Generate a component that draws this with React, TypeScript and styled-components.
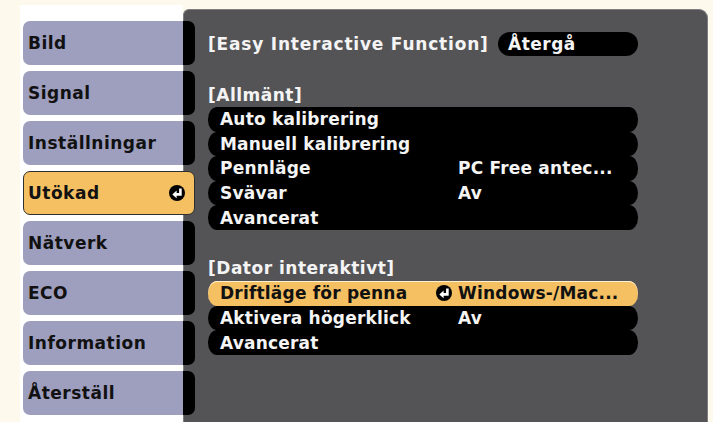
import React from 'react';
import styled, { createGlobalStyle } from 'styled-components';

const GlobalStyle = createGlobalStyle`
  html, body {
    margin: 0;
    padding: 0;
    background: #fdf9ec;
  }
  body {
    font-family: "DejaVu Sans", "Liberation Sans", sans-serif;
  }
`;

const Screen = styled.div`
  width: 713px;
  height: 422px;
  box-sizing: border-box;
  padding: 5px 5px 0 20px;
  display: flex;
  overflow: hidden;
`;

const Sidebar = styled.div`
  width: 163px;
  flex: none;
  background: #ffffff;
  box-sizing: border-box;
  padding: 16px 0 0 3px;
  display: flex;
  flex-direction: column;
  gap: 6px;
`;

// lavender tab that continues as a black tongue under the panel edge
const MenuItem = styled.div<{ $active?: boolean }>`
  position: relative;
  z-index: 1;
  width: 172px;
  height: 44px;
  flex: none;
  box-sizing: border-box;
  display: flex;
  align-items: center;
  padding: 0 9px 0 ${p => (p.$active ? '4px' : '5px')};
  border-radius: 7px;
  font-size: 17px;
  font-weight: bold;
  letter-spacing: 0.5px;
  color: #111111;
  background: ${p =>
    p.$active ? '#f5c062' : 'linear-gradient(to right, #9e9ebe 160px, #000000 160px)'};
  border: ${p => (p.$active ? '1px solid #2e2e2e' : 'none')};
`;

const MenuLabel = styled.span`
  flex: 1;
  white-space: nowrap;
`;

const Panel = styled.div`
  width: 525px;
  flex: none;
  margin-top: 4px;
  box-sizing: border-box;
  background: #545457;
  border: 1px solid #7e7e82;
  border-bottom: none;
  border-radius: 6px 9px 0 0;
  padding: 22px 0 0 24px;
  color: #f4f4f4;
  font-size: 17px;
  font-weight: bold;
`;

const HeaderRow = styled.div`
  display: grid;
  grid-template-columns: 290px 140px;
  align-items: center;
  height: 24px;
`;

const HeaderTitle = styled.span`
  letter-spacing: 0.8px;
  white-space: nowrap;
`;

const BackPill = styled.div`
  height: 24px;
  display: flex;
  align-items: center;
  padding-left: 10px;
  background: #000000;
  border-radius: 12px;
  letter-spacing: 0.5px;
`;

const SectionLabel = styled.div<{ $top: number; $h: number }>`
  margin-top: ${p => p.$top}px;
  height: ${p => p.$h}px;
  display: flex;
  align-items: center;
  white-space: nowrap;
  letter-spacing: 0.5px;
`;

const RowGroup = styled.div`
  width: 430px;
  display: flex;
  flex-direction: column;
`;

const Row = styled.div<{ $h: number; $active?: boolean }>`
  height: ${p => p.$h}px;
  flex: none;
  box-sizing: border-box;
  display: grid;
  grid-template-columns: 238px 1fr;
  align-items: center;
  padding-left: 12px;
  border-radius: 9px / 12px;
  background: ${p => (p.$active ? '#f5c062' : '#000000')};
  color: ${p => (p.$active ? '#111111' : '#f4f4f4')};
  box-shadow: ${p => (p.$active ? 'inset 0 1px 0 #fff1d2' : 'none')};
  white-space: nowrap;
  letter-spacing: 0.2px;
`;

const ValueCell = styled.span`
  display: flex;
  align-items: center;
`;

const IconSlot = styled.span<{ $inline?: boolean }>`
  display: inline-flex;
  width: 16px;
  height: 16px;
  margin: ${p => (p.$inline ? '0 6px 0 -22px' : '0')};
`;

const EnterIcon = () => (
  <svg width="16" height="16" viewBox="0 0 16 16">
    <circle cx="8" cy="8" r="8" fill="#000000" />
    <path d="M11.4 3.4 V9.4 H6.5" stroke="#ffffff" strokeWidth="2.6" fill="none" />
    <path d="M7.6 5.6 L3.3 9.4 L7.6 13.2 Z" fill="#ffffff" />
  </svg>
);

const menu = ['Bild', 'Signal', 'Inställningar', 'Utökad', 'Nätverk', 'ECO', 'Information', 'Återställ'];

const general = [
  { label: 'Auto kalibrering', value: '' },
  { label: 'Manuell kalibrering', value: '' },
  { label: 'Pennläge', value: 'PC Free antec...' },
  { label: 'Svävar', value: 'Av' },
  { label: 'Avancerat', value: '' },
];

const computer = [
  { label: 'Driftläge för penna', value: 'Windows-/Mac...', active: true },
  { label: 'Aktivera högerklick', value: 'Av', active: false },
  { label: 'Avancerat', value: '', active: false },
];

export default function App() {
  return (
    <>
      <GlobalStyle />
      <Screen>
        <Sidebar>
          {menu.map(item => (
            <MenuItem key={item} $active={item === 'Utökad'}>
              <MenuLabel>{item}</MenuLabel>
              {item === 'Utökad' && (
                <IconSlot>
                  <EnterIcon />
                </IconSlot>
              )}
            </MenuItem>
          ))}
        </Sidebar>

        <Panel>
          <HeaderRow>
            <HeaderTitle>[Easy Interactive Function]</HeaderTitle>
            <BackPill>Återgå</BackPill>
          </HeaderRow>

          <SectionLabel $top={27} $h={24}>[Allmänt]</SectionLabel>
          <RowGroup>
            {general.map(r => (
              <Row key={r.label} $h={24.6}>
                <span>{r.label}</span>
                <ValueCell>{r.value}</ValueCell>
              </Row>
            ))}
          </RowGroup>

          <SectionLabel $top={26} $h={25}>[Dator interaktivt]</SectionLabel>
          <RowGroup>
            {computer.map(r => (
              <Row key={r.label} $h={24.67} $active={r.active}>
                <span>{r.label}</span>
                <ValueCell>
                  {r.active && (
                    <IconSlot $inline>
                      <EnterIcon />
                    </IconSlot>
                  )}
                  {r.value}
                </ValueCell>
              </Row>
            ))}
          </RowGroup>
        </Panel>
      </Screen>
    </>
  );
}
